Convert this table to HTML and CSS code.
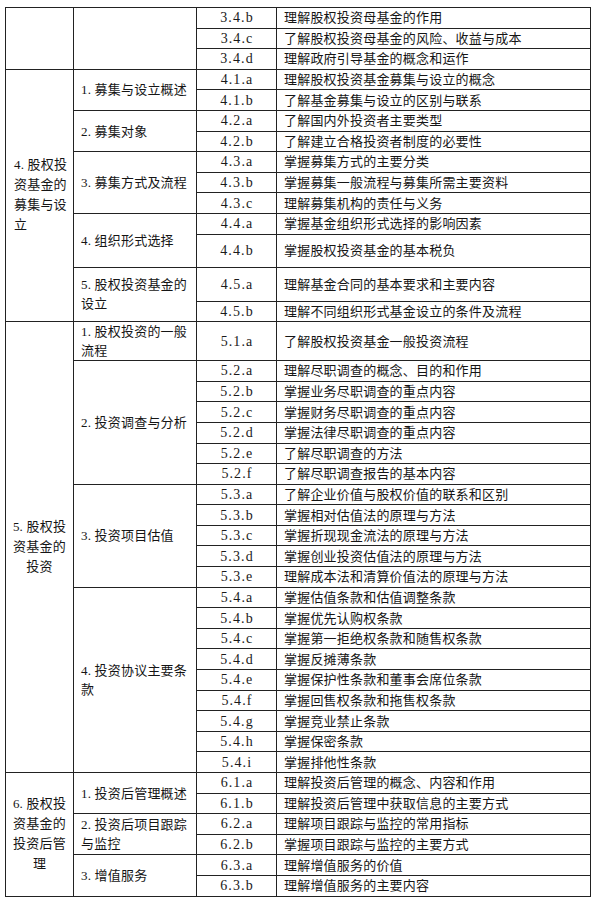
FILE: index.html
```html
<!DOCTYPE html>
<html lang="zh-CN">
<head>
<meta charset="utf-8">
<title>股权投资基金考试大纲</title>
<link rel="stylesheet" href="styles.css">
</head>
<body>
<table class="outline">
  <colgroup>
    <col class="c1"><col class="c2"><col class="c3"><col class="c4">
  </colgroup>
  <tbody>
    <tr>
      <td class="sec" rowspan="3"></td>
      <td class="topic" rowspan="3"></td>
      <td class="code">3.4.b</td><td class="item">理解股权投资母基金的作用</td>
    </tr>
    <tr><td class="code">3.4.c</td><td class="item">了解股权投资母基金的风险、收益与成本</td></tr>
    <tr><td class="code">3.4.d</td><td class="item">理解政府引导基金的概念和运作</td></tr>

    <tr>
      <td class="sec left" rowspan="11">4. 股权投<br>资基金的<br>募集与设<br>立</td>
      <td class="topic" rowspan="2">1. 募集与设立概述</td>
      <td class="code">4.1.a</td><td class="item">理解股权投资基金募集与设立的概念</td>
    </tr>
    <tr><td class="code">4.1.b</td><td class="item">了解基金募集与设立的区别与联系</td></tr>
    <tr>
      <td class="topic" rowspan="2">2. 募集对象</td>
      <td class="code">4.2.a</td><td class="item">了解国内外投资者主要类型</td>
    </tr>
    <tr><td class="code">4.2.b</td><td class="item">了解建立合格投资者制度的必要性</td></tr>
    <tr>
      <td class="topic" rowspan="3">3. 募集方式及流程</td>
      <td class="code">4.3.a</td><td class="item">掌握募集方式的主要分类</td>
    </tr>
    <tr><td class="code">4.3.b</td><td class="item">掌握募集一般流程与募集所需主要资料</td></tr>
    <tr><td class="code">4.3.c</td><td class="item">理解募集机构的责任与义务</td></tr>
    <tr>
      <td class="topic" rowspan="2">4. 组织形式选择</td>
      <td class="code">4.4.a</td><td class="item">掌握基金组织形式选择的影响因素</td>
    </tr>
    <tr class="h33"><td class="code">4.4.b</td><td class="item">掌握股权投资基金的基本税负</td></tr>
    <tr class="h34">
      <td class="topic" rowspan="2">5. 股权投资基金的<br>设立</td>
      <td class="code">4.5.a</td><td class="item">理解基金合同的基本要求和主要内容</td>
    </tr>
    <tr><td class="code">4.5.b</td><td class="item">理解不同组织形式基金设立的条件及流程</td></tr>

    <tr class="h39">
      <td class="sec" rowspan="21">5. 股权投<br>资基金的<br>投资</td>
      <td class="topic">1. 股权投资的一般<br>流程</td>
      <td class="code">5.1.a</td><td class="item">了解股权投资基金一般投资流程</td>
    </tr>
    <tr>
      <td class="topic" rowspan="6">2. 投资调查与分析</td>
      <td class="code">5.2.a</td><td class="item">理解尽职调查的概念、目的和作用</td>
    </tr>
    <tr><td class="code">5.2.b</td><td class="item">掌握业务尽职调查的重点内容</td></tr>
    <tr><td class="code">5.2.c</td><td class="item">掌握财务尽职调查的重点内容</td></tr>
    <tr><td class="code">5.2.d</td><td class="item">掌握法律尽职调查的重点内容</td></tr>
    <tr><td class="code">5.2.e</td><td class="item">了解尽职调查的方法</td></tr>
    <tr><td class="code">5.2.f</td><td class="item">了解尽职调查报告的基本内容</td></tr>
    <tr>
      <td class="topic" rowspan="5">3. 投资项目估值</td>
      <td class="code">5.3.a</td><td class="item">了解企业价值与股权价值的联系和区别</td>
    </tr>
    <tr><td class="code">5.3.b</td><td class="item">掌握相对估值法的原理与方法</td></tr>
    <tr><td class="code">5.3.c</td><td class="item">掌握折现现金流法的原理与方法</td></tr>
    <tr><td class="code">5.3.d</td><td class="item">掌握创业投资估值法的原理与方法</td></tr>
    <tr><td class="code">5.3.e</td><td class="item">理解成本法和清算价值法的原理与方法</td></tr>
    <tr>
      <td class="topic" rowspan="9">4. 投资协议主要条<br>款</td>
      <td class="code">5.4.a</td><td class="item">掌握估值条款和估值调整条款</td>
    </tr>
    <tr><td class="code">5.4.b</td><td class="item">掌握优先认购权条款</td></tr>
    <tr><td class="code">5.4.c</td><td class="item">掌握第一拒绝权条款和随售权条款</td></tr>
    <tr><td class="code">5.4.d</td><td class="item">掌握反摊薄条款</td></tr>
    <tr><td class="code">5.4.e</td><td class="item">掌握保护性条款和董事会席位条款</td></tr>
    <tr><td class="code">5.4.f</td><td class="item">掌握回售权条款和拖售权条款</td></tr>
    <tr><td class="code">5.4.g</td><td class="item">掌握竞业禁止条款</td></tr>
    <tr><td class="code">5.4.h</td><td class="item">掌握保密条款</td></tr>
    <tr><td class="code">5.4.i</td><td class="item">掌握排他性条款</td></tr>

    <tr>
      <td class="sec" rowspan="6">6. 股权投<br>资基金的<br>投资后管<br>理</td>
      <td class="topic" rowspan="2">1. 投资后管理概述</td>
      <td class="code">6.1.a</td><td class="item">理解投资后管理的概念、内容和作用</td>
    </tr>
    <tr><td class="code">6.1.b</td><td class="item">理解投资后管理中获取信息的主要方式</td></tr>
    <tr>
      <td class="topic" rowspan="2">2. 投资后项目跟踪<br>与监控</td>
      <td class="code">6.2.a</td><td class="item">理解项目跟踪与监控的常用指标</td>
    </tr>
    <tr><td class="code">6.2.b</td><td class="item">掌握项目跟踪与监控的主要方式</td></tr>
    <tr>
      <td class="topic" rowspan="2">3. 增值服务</td>
      <td class="code">6.3.a</td><td class="item">理解增值服务的价值</td>
    </tr>
    <tr><td class="code">6.3.b</td><td class="item">理解增值服务的主要内容</td></tr>
  </tbody>
</table>
</body>
</html>
```

FILE: styles.css
```css
html, body {
  margin: 0;
  padding: 0;
  background: #ffffff;
}

body {
  padding: 7px 0 0 5px;
  font-family: "Liberation Serif", "Noto Sans CJK SC", serif;
  color: #151515;
}

.outline {
  border-collapse: collapse;
  table-layout: fixed;
  width: 585px;
  font-size: 13px;
  line-height: 17px;
}

.c1 { width: 68px; }
.c2 { width: 123px; }
.c3 { width: 80px; }
.c4 { width: 314px; }

.outline td {
  border: 1px solid #222222;
  padding: 0;
  vertical-align: middle;
  white-space: nowrap;
  overflow: hidden;
}

.outline tr {
  height: 20.6px;
}

.outline tr.h33 { height: 33px; }
.outline tr.h34 { height: 34px; }
.outline tr.h39 { height: 39px; }

.sec {
  text-align: center;
  padding: 0 4px;
  letter-spacing: 0.2px;
  line-height: 20px;
}

.sec.left {
  text-align: left;
  padding-left: 8px;
}

.topic {
  padding-left: 7px !important;
  letter-spacing: 0.2px;
  line-height: 19px;
}

.code {
  text-align: center;
  font-size: 14px;
  letter-spacing: 1.1px;
  padding-left: 1px !important;
  color: #1a1a1a;
}

.item {
  padding-left: 7px !important;
  letter-spacing: 0.2px;
}
```
